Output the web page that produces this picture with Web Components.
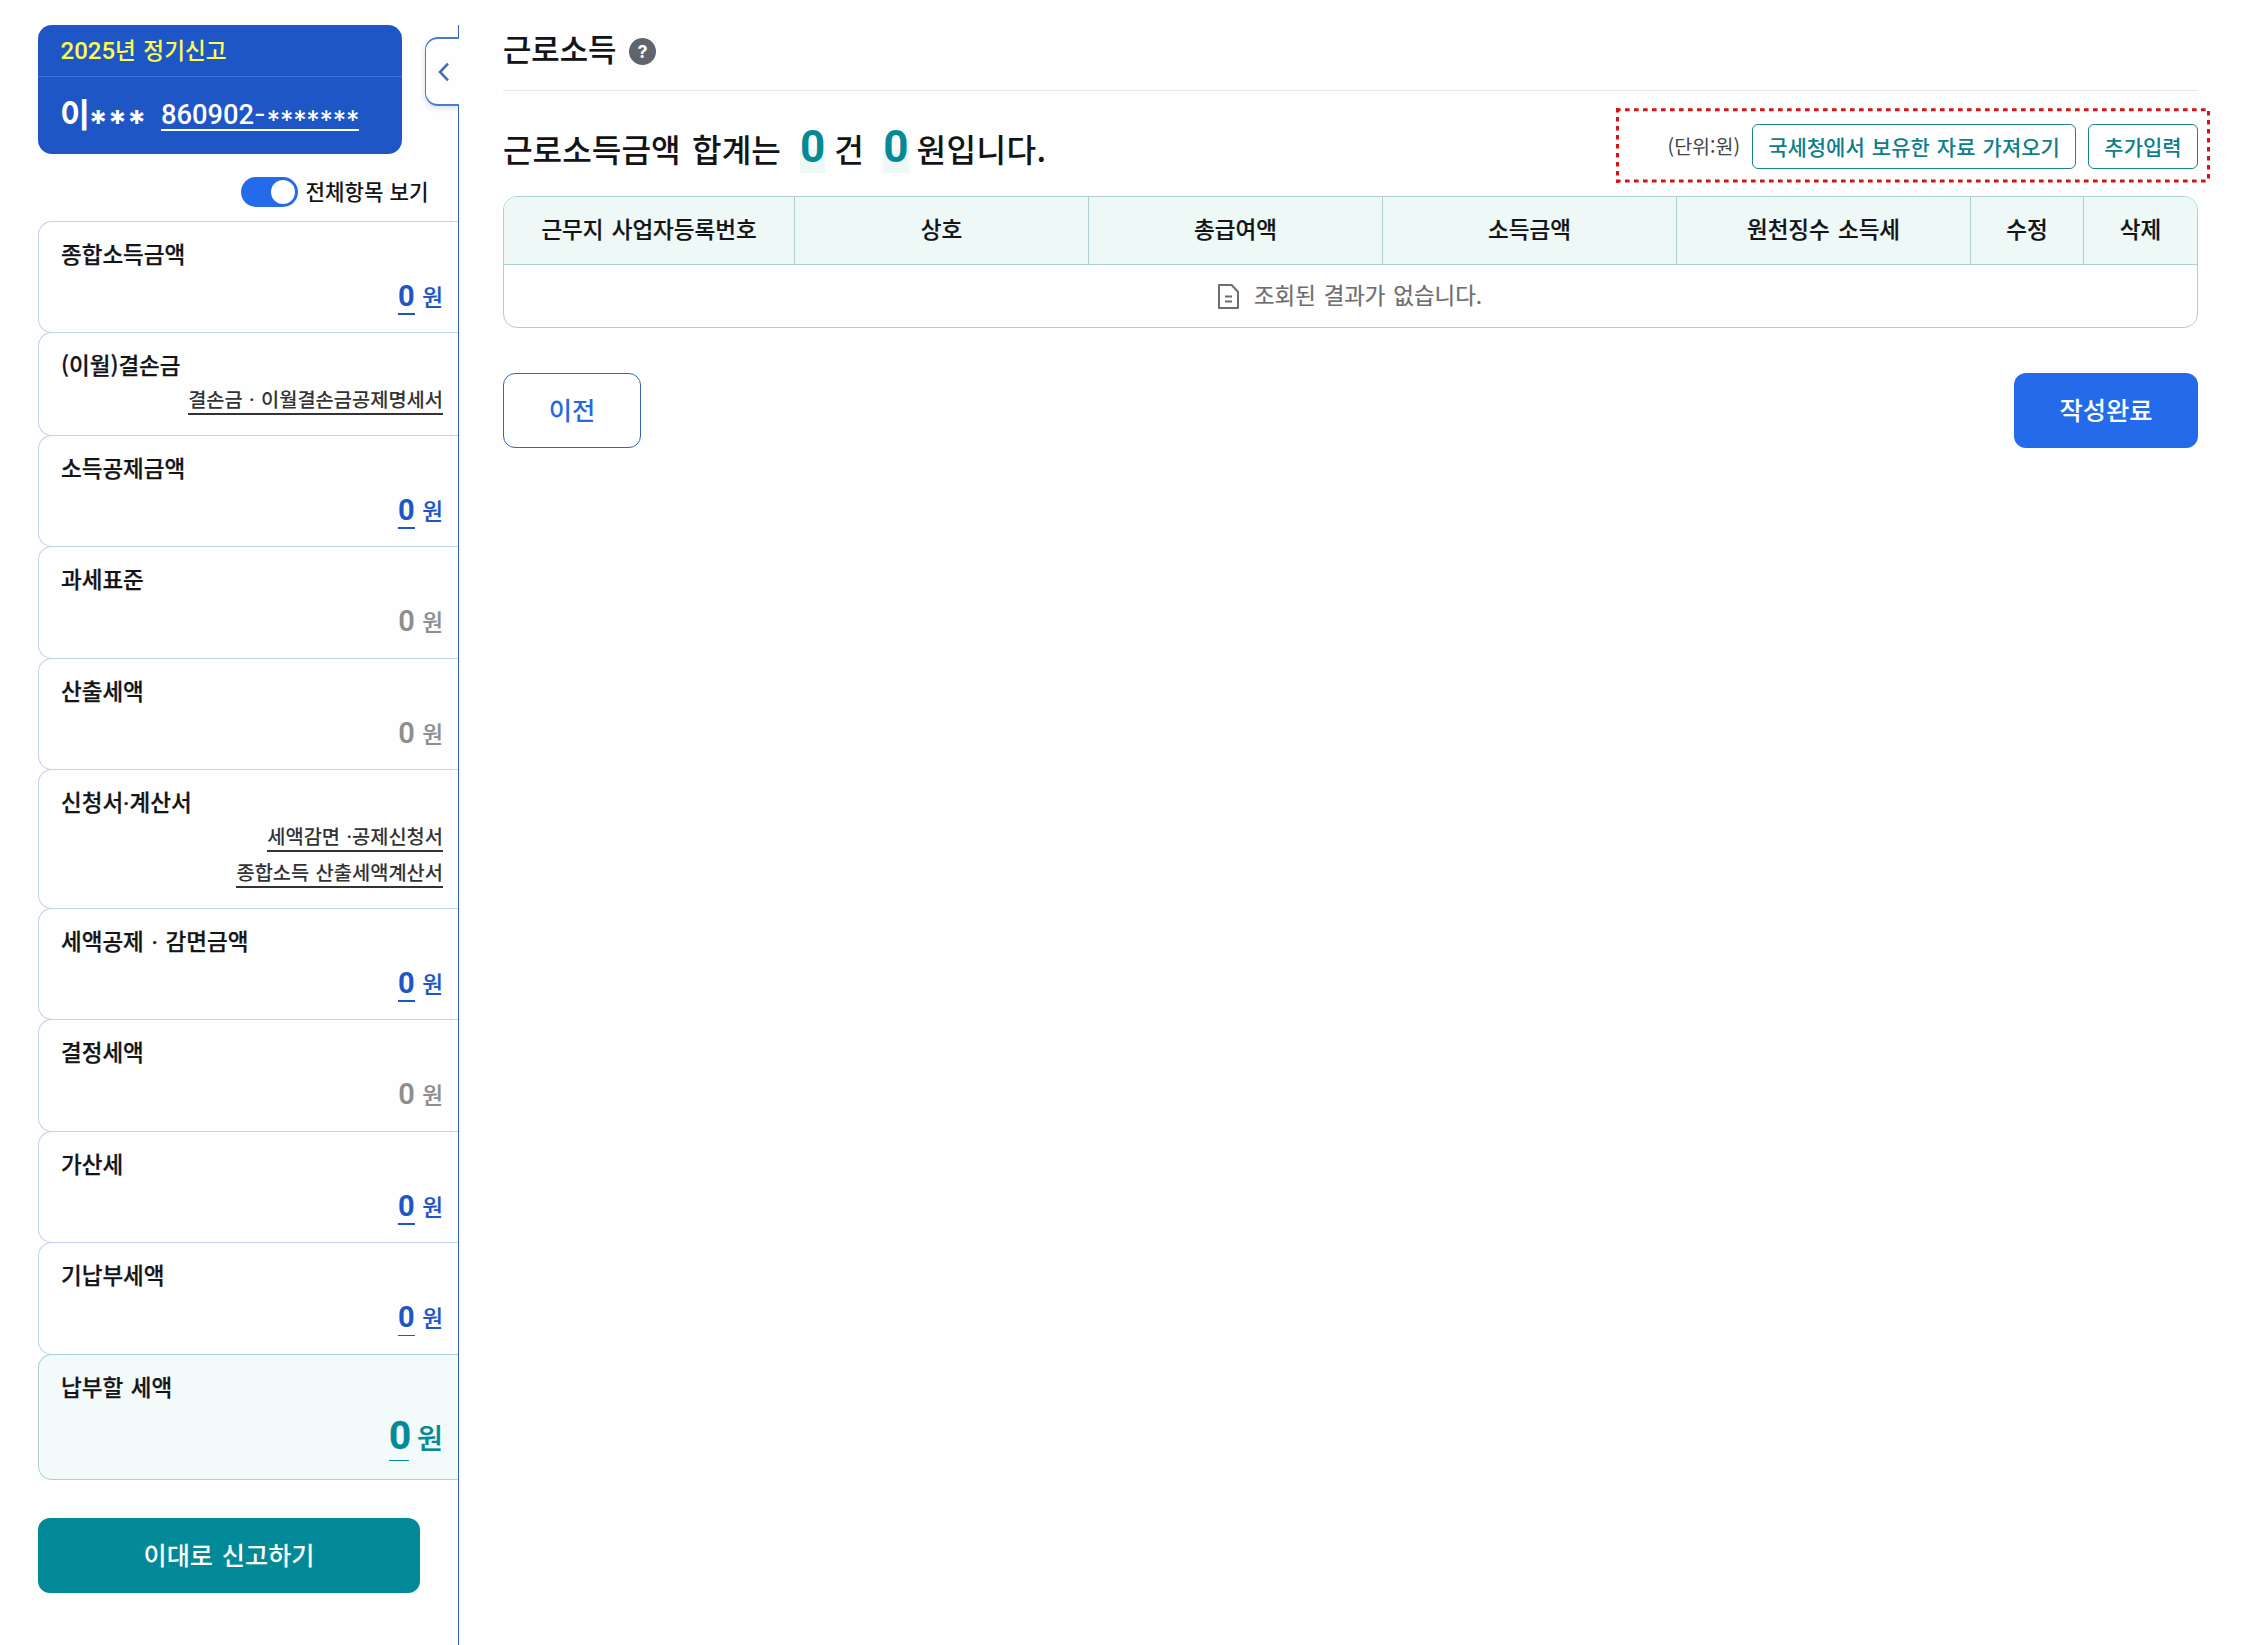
<!DOCTYPE html>
<html lang="ko">
<head>
<meta charset="utf-8">
<title>근로소득</title>
<style>
html,body{margin:0;padding:0;background:#fefefe}
body{font-family:"Noto Sans CJK KR",sans-serif;font-weight:500;color:#131416;width:2243px;height:1645px;overflow:hidden}
</style>
</head>
<body>
<tax-page></tax-page>
<script>
const define = (name, html, init) => {
  const tpl = document.createElement('template');
  tpl.innerHTML = html.trim();
  customElements.define(name, class extends HTMLElement {
    constructor() {
      super();
      this.attachShadow({mode: 'open'}).append(tpl.content.cloneNode(true));
    }
    connectedCallback() { if (init) init(this, this.shadowRoot); }
  });
};

define('report-card', `
<style>
:host{display:flex;flex-direction:column;box-sizing:border-box;width:364px;height:129px;border-radius:14px;background:#1f56c5;overflow:hidden}
.top{display:flex;align-items:center;height:52px;box-sizing:border-box;padding:0 0 1px 22.5px;border-bottom:1px solid #3e73d8;color:#fbff4f;font-size:22.6px;line-height:30px;word-spacing:1.2px}
.top span{font-family:Roboto,"Noto Sans CJK KR",sans-serif;font-size:24px;line-height:0}
.who{display:flex;flex:1;align-items:flex-start;padding:20px 0 0 22px;color:#fff}
.name{width:101px;font-size:32.5px;line-height:32px;font-weight:700;white-space:nowrap}
.name span{font-family:Inter,sans-serif;font-size:28px;line-height:0;letter-spacing:.4px;margin-left:-1.2px;font-feature-settings:"case"}
.id{font-family:Roboto,sans-serif;font-size:27.3px;line-height:28px;margin-top:4px;border-bottom:2px solid #fff;white-space:nowrap}
.id span{font-family:Inter,sans-serif;font-size:25px;line-height:0;letter-spacing:.6px;font-feature-settings:"case"}
.id .m{font-size:22px;letter-spacing:-1.2px}
</style>
<div class="top"><div><span>2025</span>년 정기신고</div></div>
<div class="who"><div class="name">이<span>***</span></div><div class="id">860902<span>-</span><span class="m">*******</span></div></div>
`);

define('toggle-switch', `
<style>
:host{display:flex;align-items:center;justify-content:flex-end;gap:7.5px;height:30px;padding-right:29.5px;font-size:21.2px;line-height:28px}
.track{display:flex;align-items:center;justify-content:flex-end;box-sizing:border-box;width:57px;height:30px;padding-right:3px;border-radius:15px;background:#246beb}
.knob{width:24px;height:24px;border-radius:50%;background:#fff}
.label{padding-bottom:3px}
</style>
<div class="track"><div class="knob"></div></div><div class="label"><slot></slot></div>
`);

define('link-text', `
<style>
:host{display:block;font-size:19.8px;line-height:26px;padding-bottom:1px;border-bottom:2px solid #333;color:#333;word-spacing:.8px;white-space:nowrap}
</style><slot></slot>
`);

define('mid-dot', `<style>:host{font-family:Roboto,sans-serif;line-height:0}</style>·`);

define('won-amount', `
<style>
:host{display:flex;align-items:baseline;gap:7.5px;margin-top:11px;color:#1f56c5;font-size:22.6px;line-height:30px}
b{font-family:Roboto,sans-serif;font-weight:700;font-size:29px;padding-bottom:2px;border-bottom:2px solid}
span{-webkit-text-stroke:.2px}
:host([muted]){color:#8e8e8e}
:host([muted]) b{border-color:transparent;font-weight:600}
:host([thin]) b{border-bottom-width:1px;padding-bottom:3px}
:host([large]){color:#048996;font-size:28.4px;gap:7.8px;line-height:40px;margin-top:13.5px;-webkit-text-stroke:.3px}
:host([large]) b{font-size:38.5px;letter-spacing:-2px;padding-bottom:4px;border-bottom-width:1px}
</style>
<b>0</b><span>원</span>
`);

define('tax-item', `
<style>
:host{display:flex;flex-direction:column;align-items:flex-end;box-sizing:border-box;height:calc(var(--h)*1px + 1px);margin-bottom:-1px;padding:14.5px 15px 0 22px;border:1px solid #c3d2ea;border-right:0;border-radius:14px 0 0 14px;background:#fefefe}
:host([total]){background:#f3fbfa;border-color:#aed0d3;position:relative}
.title{align-self:flex-start;font-size:22.5px;line-height:32px;margin-bottom:1px;word-spacing:1.4px;white-space:nowrap;-webkit-text-stroke:.25px}
.links{display:flex;flex-direction:column;align-items:flex-end;gap:7px;margin-top:5px}
</style>
<div class="title"><slot name="title"></slot></div>
<div class="links"><slot name="link"></slot></div>
<slot></slot>
`, (host, root) => {
  host.style.setProperty('--h', host.getAttribute('h'));
  if (!host.querySelector('[slot=link]')) root.querySelector('.links').remove();
});

define('collapse-handle', `
<style>
:host{position:absolute;left:425px;top:37px;display:flex;align-items:center;box-sizing:border-box;width:34px;height:69px;padding-left:12px;border:1.5px solid #4a7bd0;border-width:2px 0 2px 1.5px;border-radius:13px 0 0 13px;background:#fefefe;box-shadow:-1px 3px 5px rgba(40,70,130,.14);clip-path:inset(-4px 0 -10px -8px)}
</style>
<svg width="12" height="20" viewBox="0 0 12 20" fill="none" stroke="#4870ae" stroke-width="2.6"><path d="M10 1.6 2 10l8 8.4"/></svg>
`);

define('side-panel', `
<style>
:host{position:relative;display:flex;flex-direction:column;flex:none;box-sizing:border-box;width:459px;height:1620px;margin-top:25px;padding-left:38px;border-right:1px solid #2d62b4}
:host collapse-handle{top:12px}
toggle-switch{margin:23px 0 14px}
.file{display:flex;align-items:center;justify-content:center;box-sizing:border-box;width:382px;height:75px;padding-bottom:4px;margin-top:39px;border-radius:12px;background:#028997;color:#fff;font-size:25.2px;line-height:34px;word-spacing:1.7px}
</style>
<report-card></report-card>
<toggle-switch>전체항목 보기</toggle-switch>
<tax-item h="111"><span slot="title">종합소득금액</span><won-amount></won-amount></tax-item>
<tax-item h="103"><span slot="title">(이월)결손금</span><link-text slot="link">결손금 <mid-dot></mid-dot> 이월결손금공제명세서</link-text></tax-item>
<tax-item h="111"><span slot="title">소득공제금액</span><won-amount></won-amount></tax-item>
<tax-item h="112"><span slot="title">과세표준</span><won-amount muted></won-amount></tax-item>
<tax-item h="111"><span slot="title">산출세액</span><won-amount muted></won-amount></tax-item>
<tax-item h="139"><span slot="title">신청서<mid-dot></mid-dot>계산서</span><link-text slot="link">세액감면 <mid-dot></mid-dot>공제신청서</link-text><link-text slot="link">종합소득 산출세액계산서</link-text></tax-item>
<tax-item h="111"><span slot="title">세액공제 <mid-dot></mid-dot> 감면금액</span><won-amount></won-amount></tax-item>
<tax-item h="112"><span slot="title">결정세액</span><won-amount muted></won-amount></tax-item>
<tax-item h="111"><span slot="title">가산세</span><won-amount></won-amount></tax-item>
<tax-item h="112"><span slot="title">기납부세액</span><won-amount thin></won-amount></tax-item>
<tax-item h="125" total><span slot="title">납부할 세액</span><won-amount large></won-amount></tax-item>
<div class="file">이대로 신고하기</div>
<collapse-handle></collapse-handle>
`);

define('page-heading', `
<style>
:host{display:flex;align-items:flex-start;gap:12.6px;box-sizing:border-box;height:91px;padding-top:28px;border-bottom:1px solid #e4e6e6}
.t{font-size:30.8px;line-height:40px;-webkit-text-stroke:.2px}
.q{display:flex;align-items:center;justify-content:center;width:27px;height:27px;margin-top:10px;border-radius:50%;background:#60656d;color:#fff;font:700 18px/27px Inter,sans-serif}
</style>
<div class="t"><slot></slot></div><div class="q">?</div>
`);

define('sum-text', `
<style>
:host{display:flex;align-items:baseline;font-size:32.2px;line-height:48px;word-spacing:2.4px;padding-top:5px;white-space:nowrap}
b{font-family:Roboto,sans-serif;font-weight:700;font-size:44px;line-height:46px;height:49px;color:#048996;background:linear-gradient(transparent 25px,#edf8f7 25px)}
.a{margin:0 9px 0 19px}.b{margin:0 8px 0 19.5px}
.e{letter-spacing:.4px}
</style>
<span>근로소득금액 합계는</span><b class="a">0</b><span>건</span><b class="b">0</b><span class="e">원입니다.</span>
`);

define('line-button', `
<style>
:host{display:flex;align-items:center;justify-content:center;box-sizing:border-box;height:45px;padding-bottom:2px;border:1px solid #188490;border-radius:6px;background:#fff;color:#0e7e8a;font-size:21px;line-height:30px;word-spacing:1.2px;white-space:nowrap}
</style><slot></slot>
`);

define('tool-group', `
<style>
:host{position:relative;display:flex;align-items:center;justify-content:flex-end;gap:12px;box-sizing:border-box;width:594px;height:75px;margin-right:-12px;padding:2px 12px 0 0}
svg{position:absolute;left:0;top:0}
.unit{font-size:19.5px;line-height:28px;padding-bottom:2px;font-weight:400;color:#444}
</style>
<svg width="594" height="75" fill="none" stroke="#d41414" stroke-width="3" stroke-dasharray="4.6 4.4"><path d="M0 1.7H594"/><path d="M0 73H594"/><path d="M1.5 0V75"/><path d="M592.5 3V75"/></svg>
<div class="unit">(단위:원)</div>
<line-button style="width:324px">국세청에서 보유한 자료 가져오기</line-button>
<line-button style="width:110px">추가입력</line-button>
`);

define('income-table', `
<style>
:host{display:flex;flex-direction:column;box-sizing:border-box;height:132px;border:1px solid #b0cfd3;border-radius:14px;overflow:hidden}
.head{display:grid;grid-template-columns:291px 294px 294px 294px 294px 113px 1fr;height:67px;background:#eef8f7;border-bottom:1px solid #b0cfd3}
.head div{display:flex;align-items:center;justify-content:center;border-right:1px solid #b0cfd3;padding-bottom:6px;font-size:22.5px;line-height:32px;word-spacing:1.9px;-webkit-text-stroke:.2px}
.head div:last-child{border-right:0}
.empty{display:flex;flex:1;align-items:center;justify-content:center;gap:15px;color:#6d6d6d;font-weight:400;font-size:22.4px;line-height:32px;word-spacing:1.6px;padding-right:1px}
.empty span{margin-top:-4px;-webkit-text-stroke:.2px}
</style>
<div class="head"><div>근무지 사업자등록번호</div><div>상호</div><div>총급여액</div><div>소득금액</div><div>원천징수 소득세</div><div>수정</div><div>삭제</div></div>
<div class="empty"><svg width="21" height="25" viewBox="0 0 21 25" fill="none" stroke="#6d6d6d" stroke-width="2"><path d="M1 1h12.6L20 7.8V24H1z" stroke-linejoin="round"/><path d="M7 12.5h7M7 17.6h7"/></svg><span>조회된 결과가 없습니다.</span></div>
`);

define('action-bar', `
<style>
:host{display:flex;justify-content:space-between;margin-top:45px}
div{display:flex;align-items:center;justify-content:center;box-sizing:border-box;height:75px;padding-bottom:4px;border-radius:12px;font-size:25.3px;line-height:34px}
.prev{width:138px;border:1px solid #2f66c4;background:#fff;color:#256ae0}
.done{width:184px;background:#246beb;color:#fff}
</style>
<div class="prev">이전</div><div class="done">작성완료</div>
`);

define('income-main', `
<style>
:host{display:flex;flex-direction:column;width:1695px;margin-left:44px}
.bar{display:flex;align-items:center;justify-content:space-between;height:75px;margin:17px 0 13px}
</style>
<page-heading>근로소득</page-heading>
<div class="bar"><sum-text></sum-text><tool-group></tool-group></div>
<income-table></income-table>
<action-bar></action-bar>
`);

define('tax-page', `
<style>:host{display:flex;align-items:flex-start;width:2243px;height:1645px}</style>
<side-panel></side-panel><income-main></income-main>
`);
</script>
</body>
</html>
